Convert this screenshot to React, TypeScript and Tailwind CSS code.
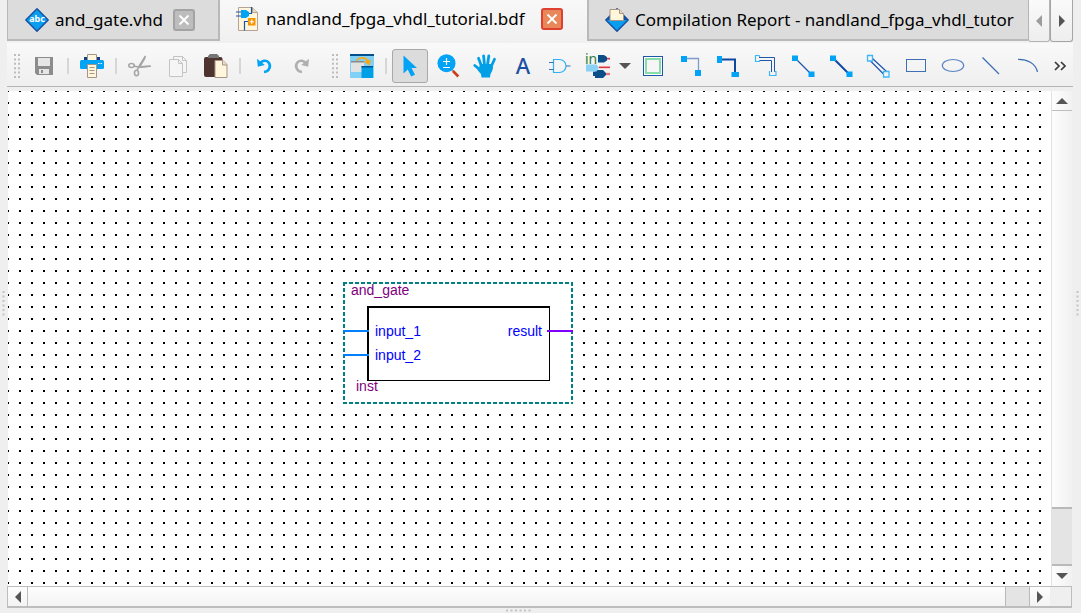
import React from "react";
import type { ReactNode } from "react";

const BLUE = "#00a3f5";
const NAVY = "#2056a8";

function Svg({ children }: { children: ReactNode }) {
  return (
    <svg viewBox="0 0 24 24" width="24" height="24" className="block shrink-0 overflow-visible" aria-hidden="true">
      {children}
    </svg>
  );
}

const SaveIcon = () => (
  <Svg>
    <path d="M3 3h18v18H5l-2-2z" fill="#8c8c8c" />
    <path d="M6 4h12v8H6z" fill="#e6e6e6" />
    <path d="M7 15h10v5H7z" fill="#e6e6e6" />
    <path d="M9 16h2v3H9z" fill="#8c8c8c" />
  </Svg>
);
const PrintIcon = () => (
  <Svg>
    <path d="M4 3h16v4H4z" fill="#123f8c" />
    <path d="M7.5.5h9V7h-9z" fill="#fff6dc" stroke="#a89484" />
    <rect x="0" y="6" width="24" height="9" rx="1.5" fill={BLUE} />
    <path d="M18 9.5h1.5M20.500 9.500H22" stroke="#fff" strokeWidth="1.2" />
    <path d="M7.500 10.500h9v13h-9z" fill="#fff6dc" stroke="#a89484" />
    <path d="M9.500 13.500h5M9.500 16.500h5M9.500 19.500h5" stroke="#a89484" />
  </Svg>
);
const CutIcon = () => (
  <Svg>
    <g fill="none" stroke="#a6a6a6" strokeWidth="1.6">
      <ellipse cx="3.500" cy="11.500" rx="2.700" ry="2" />
      <ellipse cx="8.500" cy="19" rx="2" ry="2.700" />
      <path d="M6 12l4 1 13-.8M9 16.500l2-4L17.500 2" />
    </g>
    <path d="M10 12.200l13-.9-4 2-9 1z M10 13L17 2l.5 2.500L12 14z" fill="#a6a6a6" />
  </Svg>
);
const CopyIcon = () => (
  <Svg>
    <g fill="#f5f5f5" stroke="#c4c4c4">
      <path d="M7.500 2.500h9l4 4v12h-13z" />
      <path d="M3.500 5.500h9l4 4v13h-13z" />
      <path d="M12.500 5.500v4h4M16.500 2.500v4h4" fill="none" />
    </g>
  </Svg>
);
const PasteIcon = () => (
  <Svg>
    <rect x="0" y="3" width="18.500" height="20" rx="2" fill="#4e342e" />
    <path d="M4 4V2l2-2h7l2 2v2z" fill="#757575" />
    <path d="M11 6.500h8l4 4v13H11z" fill="#fff6dc" stroke="#a89484" />
    <path d="M18.500 6.500v4.500H23" fill="#eadcc8" stroke="#a89484" />
  </Svg>
);
const UndoIcon = () => (
  <Svg>
    <path d="M8 9.500C10 6.500 14 5.800 16.500 8.300c3 3.400 1 9.200-4.500 9.700" fill="none" stroke={BLUE} strokeWidth="2.600" />
    <path d="M5 4.700l.8 8 7-1.700z" fill={BLUE} />
  </Svg>
);
const RedoIcon = () => (
  <Svg>
    <path d="M16 9.500C14 6.500 10 5.800 7.500 8.300c-3 3.400-1 9.200 4.500 9.700" fill="none" stroke="#b0b0b0" strokeWidth="2.600" />
    <path d="M19 4.700l-.8 8-7-1.700z" fill="#b0b0b0" />
  </Svg>
);
const WindowsIcon = () => (
  <Svg>
    <path d="M0 0h24v24H0z" fill="#81d0f5" />
    <path d="M0 0h24v2H0z" fill="#00508f" />
    <path d="M1 7h13v11H1z" fill="#e2e2e2" />
    <path d="M1 7h13v1.500H1z" fill="#8a8a8a" />
    <path d="M6.500 6.500C9.500 3 15.500 3 18 7" fill="none" stroke="#f5a81c" strokeWidth="1.800" />
    <path d="M13.500 7.500l7.500-2-1.500 6z" fill="#f5a81c" />
    <path d="M11.500 12H23v12H11.500z" fill="#009fe6" />
    <path d="M11.500 12H23v1.500H11.500z" fill="#00508f" />
  </Svg>
);
const PointerIcon = () => (
  <Svg>
    <path d="M5.500 1.500v18l4.200-4 3.500 7 3.800-1.800-3.500-6.700H19z" fill={BLUE} />
  </Svg>
);
const ZoomIcon = () => (
  <Svg>
    <path d="M15 15l2.500 2.500" stroke="#9aa0a6" strokeWidth="2" />
    <path d="M17 17l5.300 5.500" stroke="#cc3d1e" strokeWidth="2.600" />
    <circle cx="10.500" cy="9.200" r="9" fill={BLUE} />
    <path d="M7 7.500h7M10.500 4v7M7 13.500h7" stroke="#fff" strokeWidth="1.200" />
  </Svg>
);
const HandIcon = () => (
  <Svg>
    <g fill="none" stroke="#009fe6" strokeWidth="2.800" strokeLinecap="round">
      <path d="M8.500 12L5.500 4.200M11.500 11L10.600 1.800M14.500 11l1.300-9M18 13l3.500-7.800M8 16.500L1.800 11.500" />
    </g>
    <path d="M7 10h12l1 3c0 3-1.500 5-2.500 7l-.5 3.500H8.500L8 20c-1.500-1.500-3.500-4-5-6.500l3 .5z" fill="#009fe6" />
  </Svg>
);
const TextIcon = () => (
  <Svg>
    <text x="12" y="20" textAnchor="middle" fontFamily="Noto Sans, sans-serif" fontSize="22" fontWeight="500" fill="#1c4fa3">
      A
    </text>
  </Svg>
);
const GateIcon = () => (
  <Svg>
    <path d="M5.500 5.500h6a6.500 6.500 0 0 1 0 13h-6z" fill="none" stroke="#2fb2f5" strokeWidth="1.200" />
    <path d="M1 8.500h4.500M1 15.500h4.500M18 12h4.500" stroke="#3f6fb5" strokeWidth="1.200" />
  </Svg>
);
const PinsIcon = () => (
  <Svg>
    <text x="-1" y="10" fontFamily="Noto Sans, sans-serif" fontSize="14" fill="#2f7d38">
      in
    </text>
    <path d="M12 1h6l3 2v3.500L18 8.500h-6z M7 17.500h2V16h8l3 3v2l-3 3H9v-2H7z" fill="#0b4f8a" />
    <path d="M21 4.700h3M13 13.300h11M20 20h4" stroke="#f3b0b3" strokeWidth="2.400" />
    <path d="M21 4.700h3M13 13.300h11M20 20h4" stroke="#dc3b42" strokeWidth="1.200" />
    <path d="M0 10.500h10.500l2.500 3-2.500 4H0z" fill="#8ad2f3" />
  </Svg>
);
const SymbolIcon = () => (
  <Svg>
    <rect x="2.500" y="2.500" width="19" height="19" fill="#fff" stroke={NAVY} />
    <rect x="5" y="5" width="14" height="14" fill="#f6f6f6" stroke="#86dcaa" strokeWidth="2" />
  </Svg>
);
const NodeIcon = () => (
  <Svg>
    <path d="M8 4.500h11.500V17" fill="none" stroke="#7f9bcf" strokeWidth="1.300" />
    <path d="M2 2h6v6H2zM16 16h6v6h-6z" fill={BLUE} />
  </Svg>
);
const BusIcon = () => (
  <Svg>
    <path d="M5 5.500h14V18" fill="none" stroke="#0f47a1" strokeWidth="2" />
    <path d="M1 2h5v7H1zM15.500 18H23v5h-7.500z" fill={BLUE} />
  </Svg>
);
const ConduitIcon = () => (
  <Svg>
    <path d="M5 3.500h15.500V18M5 6.500h12.500V18" fill="none" stroke={NAVY} strokeWidth="1" />
    <path d="M5.500 1.500h-4v6h4V6M5.500 1.500V3M16 17.500h-.5v4h6.500v-4h-1.500" fill="none" stroke="#3db8f7" strokeWidth="1.200" />
  </Svg>
);
const DiagonalIcon = () => (
  <Svg>
    <path d="M5 5l15 15" stroke={NAVY} strokeWidth="1.200" />
    <path d="M1 1.500h6v5.500H1zM17.500 17.500h6V23h-6z" fill={BLUE} />
  </Svg>
);
const DiagonalBusIcon = () => (
  <Svg>
    <path d="M5 5l15 15" stroke="#0f47a1" strokeWidth="2" />
    <path d="M1 1.500h6v5.500H1zM17.500 17.500h6V23h-6z" fill={BLUE} />
  </Svg>
);
const DiagonalConduitIcon = () => (
  <Svg>
    <path d="M6.500 4.500l14 13M4.500 7l13 13" stroke={NAVY} strokeWidth="1.200" />
    <path d="M1.500 1.500h5V7h-5zM17.500 17.500h5.500V23h-5.500z" fill="#f6f6f6" stroke="#3db8f7" strokeWidth="1.300" />
  </Svg>
);
const RectIcon = () => (
  <Svg>
    <rect x="2.500" y="5.500" width="19" height="12" fill="none" stroke="#3f6fb5" />
  </Svg>
);
const OvalIcon = () => (
  <Svg>
    <ellipse cx="12" cy="11.500" rx="10.700" ry="6" fill="none" stroke="#5a83c4" strokeWidth="1.200" />
  </Svg>
);
const LineIcon = () => (
  <Svg>
    <path d="M3.500 3.500L20 20" stroke="#3f6fb5" strokeWidth="1.200" />
  </Svg>
);
const ArcIcon = () => (
  <Svg>
    <path d="M2 5.300C11 5 19.500 9.500 21.500 18" fill="none" stroke="#3f6fb5" strokeWidth="1.200" />
  </Svg>
);

const VhdIcon = () => (
  <Svg>
    <path d="M12 .8L23.200 12 12 23.200.8 12z" fill="#0b9df0" stroke="#15509f" strokeWidth="1.400" strokeLinejoin="round" />
    <text x="12" y="14" textAnchor="middle" fontFamily="Noto Sans, sans-serif" fontSize="9" fontWeight="700" fill="#fff">
      abc
    </text>
  </Svg>
);
const BdfIcon = () => (
  <Svg>
    <path d="M2.500.5h14l5 5v18h-19z" fill="#fff6dc" stroke="#b5a294" />
    <path d="M16.500.5v5h5" fill="#eadcc8" stroke="#b5a294" />
    <path d="M0 5h5M0 9h5M11 6.500h4.500V0M8.500 23.500v-9H13" fill="none" stroke="#1b56a5" strokeWidth="1.200" />
    <path d="M5 3h5l3 2v4l-3 2H5z" fill={BLUE} />
    <path d="M12 11h7.500v7.500H12z" fill="#f79400" />
    <path d="M13.500 14.750h4.500M15.750 12.500V17" stroke="#fff" strokeWidth="1.200" />
  </Svg>
);
const ReportIcon = () => (
  <Svg>
    <path d="M12 .8L23.200 12 12 23.200.8 12z" fill="#0b9df0" stroke="#15509f" strokeWidth="1.400" strokeLinejoin="round" />
    <path d="M1 12h22l-4-4H5z" fill="#15509f" />
    <path d="M5 1.500h9.500l4 4V12.500H5z" fill="#fff6dc" stroke="#a89484" />
    <path d="M14.500 1.500v4h4" fill="#eadcc8" stroke="#a89484" />
  </Svg>
);

type Tool = { label: string; icon: ReactNode; active?: boolean };

const clipboardTools: Tool[] = [
  { label: "Cut", icon: <CutIcon /> },
  { label: "Copy", icon: <CopyIcon /> },
  { label: "Paste", icon: <PasteIcon /> },
];
const historyTools: Tool[] = [
  { label: "Undo", icon: <UndoIcon /> },
  { label: "Redo", icon: <RedoIcon /> },
];
const editTools: Tool[] = [
  { label: "Selection Tool", icon: <PointerIcon />, active: true },
  { label: "Zoom Tool", icon: <ZoomIcon /> },
  { label: "Hand Tool", icon: <HandIcon /> },
  { label: "Text Tool", icon: <TextIcon /> },
  { label: "Symbol Tool", icon: <GateIcon /> },
  { label: "Pin Tool", icon: <PinsIcon /> },
];
const drawTools: Tool[] = [
  { label: "Block Tool", icon: <SymbolIcon /> },
  { label: "Orthogonal Node Tool", icon: <NodeIcon /> },
  { label: "Orthogonal Bus Tool", icon: <BusIcon /> },
  { label: "Orthogonal Conduit Tool", icon: <ConduitIcon /> },
  { label: "Diagonal Node Tool", icon: <DiagonalIcon /> },
  { label: "Diagonal Bus Tool", icon: <DiagonalBusIcon /> },
  { label: "Diagonal Conduit Tool", icon: <DiagonalConduitIcon /> },
  { label: "Rectangle Tool", icon: <RectIcon /> },
  { label: "Oval Tool", icon: <OvalIcon /> },
  { label: "Line Tool", icon: <LineIcon /> },
  { label: "Arc Tool", icon: <ArcIcon /> },
];

function ToolButton({ label, icon, active }: Tool) {
  return (
    <button
      type="button"
      aria-label={label}
      aria-pressed={active}
      className={
        active
          ? "flex h-[34px] w-9 shrink-0 items-center justify-center rounded-[3px] border border-[#a9a9a9] bg-[#dcdcdc]"
          : "flex h-[34px] w-9 shrink-0 items-center justify-center rounded-[3px]"
      }
    >
      {icon}
    </button>
  );
}

const tools = (list: Tool[]) => list.map((t) => <ToolButton key={t.label} {...t} />);

function Separator() {
  return (
    <div className="flex w-3 shrink-0 justify-center">
      <div className="h-4 w-0.5 bg-[#d6d6d6]" />
    </div>
  );
}

function Grip() {
  return (
    <svg width="6" height="24" className="mx-1.5 block shrink-0" aria-hidden="true">
      <path d="M1 0v24M5 0v24" stroke="#bdbdbd" strokeWidth="2" strokeDasharray="2 2.400" />
    </svg>
  );
}

function Triangle({ dir, muted }: { dir: "up" | "down" | "left" | "right"; muted?: boolean }) {
  const paths = { up: "M0 9l6-6 6 6z", down: "M0 3h12L6 9z", left: "M9 0v12L3 6z", right: "M3 0v12l6-6z" };
  return (
    <svg width="12" height="12" className="block" aria-hidden="true">
      <path d={paths[dir]} fill={muted ? "#9c9c9c" : "#555555"} />
    </svg>
  );
}

function CloseButton({ name, hot }: { name: string; hot?: boolean }) {
  return (
    <button
      type="button"
      aria-label={`Close ${name}`}
      className={
        hot
          ? "flex h-[22px] w-[22px] shrink-0 items-center justify-center rounded-[3px] border-2 border-[#dd4030] bg-[#e8875a]"
          : "flex h-[22px] w-[22px] shrink-0 items-center justify-center rounded-[3px] border-2 border-[#a3a3a3] bg-[#bdbdbd]"
      }
    >
      <svg width="12" height="12" className="block" aria-hidden="true">
        <path d="M1.500 1.500l9 9M10.500 1.500l-9 9" stroke="#fff" strokeWidth="1.800" />
      </svg>
    </button>
  );
}

function AndGate() {
  return (
    <div className="absolute top-[191px] left-[335px] h-[122px] w-[230px] bg-white font-['Liberation_Sans',Arial,sans-serif] text-[14px] leading-4">
      <svg width="230" height="122" className="absolute inset-0 block" aria-hidden="true" shapeRendering="crispEdges">
        <path d="M0 1h230M0 121h230M1 0v122M229 0v122" fill="none" stroke="#008080" strokeWidth="2" strokeDasharray="4 2" />
        <path d="M24 25h183M25 24v75" stroke="#000" strokeWidth="2" />
        <path d="M24 98.500h183M206.500 24v75" stroke="#000" strokeWidth="1" />
        <path d="M0 49h26M0 73h26" stroke="#0080ff" strokeWidth="2" />
        <path d="M204 49h26" stroke="#8000ff" strokeWidth="2" />
      </svg>
      <span className="absolute top-0 left-2 text-[#800080]">and_gate</span>
      <span className="absolute top-[41px] left-8 text-[#0000ff]">input_1</span>
      <span className="absolute top-[65px] left-8 text-[#0000ff]">input_2</span>
      <span className="absolute top-[41px] right-[31px] text-[#0000ff]">result</span>
      <span className="absolute top-24 left-[13px] text-[#800080]">inst</span>
    </div>
  );
}

function SideGrip() {
  return (
    <svg width="3" height="26" className="block" aria-hidden="true">
      <path d="M1.500 0v26" stroke="#c4c4c4" strokeWidth="2" strokeDasharray="2 2.500" />
    </svg>
  );
}

export default function App() {
  return (
    <div className="flex h-screen flex-col bg-[#efefef] font-['Noto_Sans',sans-serif] text-[17px] text-black">
      <div className="flex min-h-0 flex-1">
        <div className="flex w-[7px] shrink-0 items-center justify-center">
          <SideGrip />
        </div>

        <main className="flex min-w-0 flex-1 flex-col">
          <nav aria-label="Open files" className="flex h-[43px] shrink-0 items-start bg-[#f1f1f1]">
            <div className="flex h-[41px] w-[213px] shrink-0 items-center border-r-2 border-b-2 border-l border-[#b9b9b9] bg-[#dcdcdc] pl-[17px]">
              <a href="#and-gate" className="flex items-center gap-[6px] leading-6 whitespace-nowrap">
                <VhdIcon />
                and_gate.vhd
              </a>
              <div className="ml-[10px]">
                <CloseButton name="and_gate.vhd" />
              </div>
            </div>
            <div className="flex h-[43px] w-[367px] shrink-0 items-center bg-gradient-to-b from-[#f8f8f8] to-[#f0f0f0] pb-[5px] pl-4">
              <a href="#tutorial" aria-current="page" className="flex items-center gap-[6px] leading-6 whitespace-nowrap">
                <BdfIcon />
                nandland_fpga_vhdl_tutorial.bdf
              </a>
              <div className="mr-6 ml-auto">
                <CloseButton name="nandland_fpga_vhdl_tutorial.bdf" hot />
              </div>
            </div>
            <div className="flex h-[41px] min-w-0 flex-1 items-center overflow-hidden border-b-2 border-l-2 border-[#b9b9b9] bg-[#dcdcdc] pl-4">
              <a href="#report" className="flex items-center gap-[6px] leading-6 whitespace-nowrap">
                <ReportIcon />
                Compilation Report - nandland_fpga_vhdl_tutor
              </a>
            </div>
            <button
              type="button"
              aria-label="Scroll tabs left"
              className="flex h-[42px] w-[22px] shrink-0 items-center justify-center rounded-b-[3px] border border-t-0 border-[#b5b5b5] bg-gradient-to-b from-[#fafafa] to-[#eeeeee]"
            >
              <Triangle dir="left" muted />
            </button>
            <button
              type="button"
              aria-label="Scroll tabs right"
              className="flex h-[42px] w-[23px] shrink-0 items-center justify-center rounded-b-[3px] border border-t-0 border-[#a5a5a5] bg-gradient-to-b from-[#fafafa] to-[#eeeeee]"
            >
              <Triangle dir="right" />
            </button>
          </nav>

          <div
            role="toolbar"
            aria-label="Block editor tools"
            className="flex h-11 shrink-0 items-center border-b border-[#b5b5b5] bg-gradient-to-b from-[#f9f9f9] to-[#efefef] pt-[3px] pl-px"
          >
            <Grip />
            <ToolButton label="Save" icon={<SaveIcon />} />
            <Separator />
            <ToolButton label="Print" icon={<PrintIcon />} />
            <Separator />
            <div className="flex gap-0.5">{tools(clipboardTools)}</div>
            <Separator />
            <div className="flex gap-0.5">{tools(historyTools)}</div>
            <div className="w-1.5 shrink-0" />
            <Grip />
            <ToolButton label="Swap Window" icon={<WindowsIcon />} />
            <Separator />
            <div className="flex w-56 shrink-0 justify-between">{tools(editTools)}</div>
            <button type="button" aria-label="Pin types" className="flex h-[34px] w-[18px] shrink-0 items-center justify-center">
              <Triangle dir="down" />
            </button>
            <div className="ml-px flex flex-1 justify-between">{tools(drawTools)}</div>
            <button type="button" aria-label="More tools" className="flex h-[34px] w-[27px] shrink-0 items-center justify-center">
              <svg width="12" height="10" className="block" aria-hidden="true">
                <path d="M1 1l4 4-4 4M7 1l4 4-4 4" fill="none" stroke="#3a3a3a" strokeWidth="1.700" />
              </svg>
            </button>
          </div>

          <div className="mt-1 mr-px ml-px flex min-h-0 flex-1">
            <section
              aria-label="Schematic"
              className="relative min-w-0 flex-1 overflow-hidden bg-white bg-[linear-gradient(transparent_2px,#fff_2px),linear-gradient(90deg,#000_2px,#fff_2px)] bg-[length:12px_12px] bg-[position:-1px_-1px]"
            >
              <AndGate />
            </section>
            <div className="flex w-[21px] shrink-0 flex-col border-l border-[#e2e2e2] bg-gradient-to-r from-[#fdfdfd] to-[#f1f1f1]">
              <button type="button" aria-label="Scroll up" className="flex h-5 items-center justify-center border-b border-[#bdbdbd]">
                <Triangle dir="up" />
              </button>
              <div className="flex-1" />
              <div className="h-[59px] border-t-2 border-b-2 border-[#b9b9b9] bg-[#e4e4e4]" />
              <button type="button" aria-label="Scroll down" className="flex h-5 items-center justify-center">
                <Triangle dir="down" />
              </button>
            </div>
          </div>

          <div className="mr-px flex h-[22px] shrink-0 border border-b-2 border-[#bdbdbd] bg-gradient-to-b from-[#fdfdfd] to-[#f4f4f4]">
            <button type="button" aria-label="Scroll left" className="flex w-5 items-center justify-center border-r border-[#bdbdbd]">
              <Triangle dir="left" />
            </button>
            <div className="flex-1" />
            <div className="w-[25px] border-r border-l border-[#b9b9b9] bg-[#e4e4e4]" />
            <button type="button" aria-label="Scroll right" className="flex w-5 items-center justify-center">
              <Triangle dir="right" />
            </button>
            <div className="w-[21px] bg-[#efefef]" />
          </div>
        </main>

        <div className="flex w-2 shrink-0 items-center justify-center">
          <SideGrip />
        </div>
      </div>
      <div className="flex h-[5px] shrink-0 items-center justify-center pr-11">
        <svg width="26" height="3" className="block" aria-hidden="true">
          <path d="M0 1.500h26" stroke="#c4c4c4" strokeWidth="2" strokeDasharray="2 2.500" />
        </svg>
      </div>
    </div>
  );
}
